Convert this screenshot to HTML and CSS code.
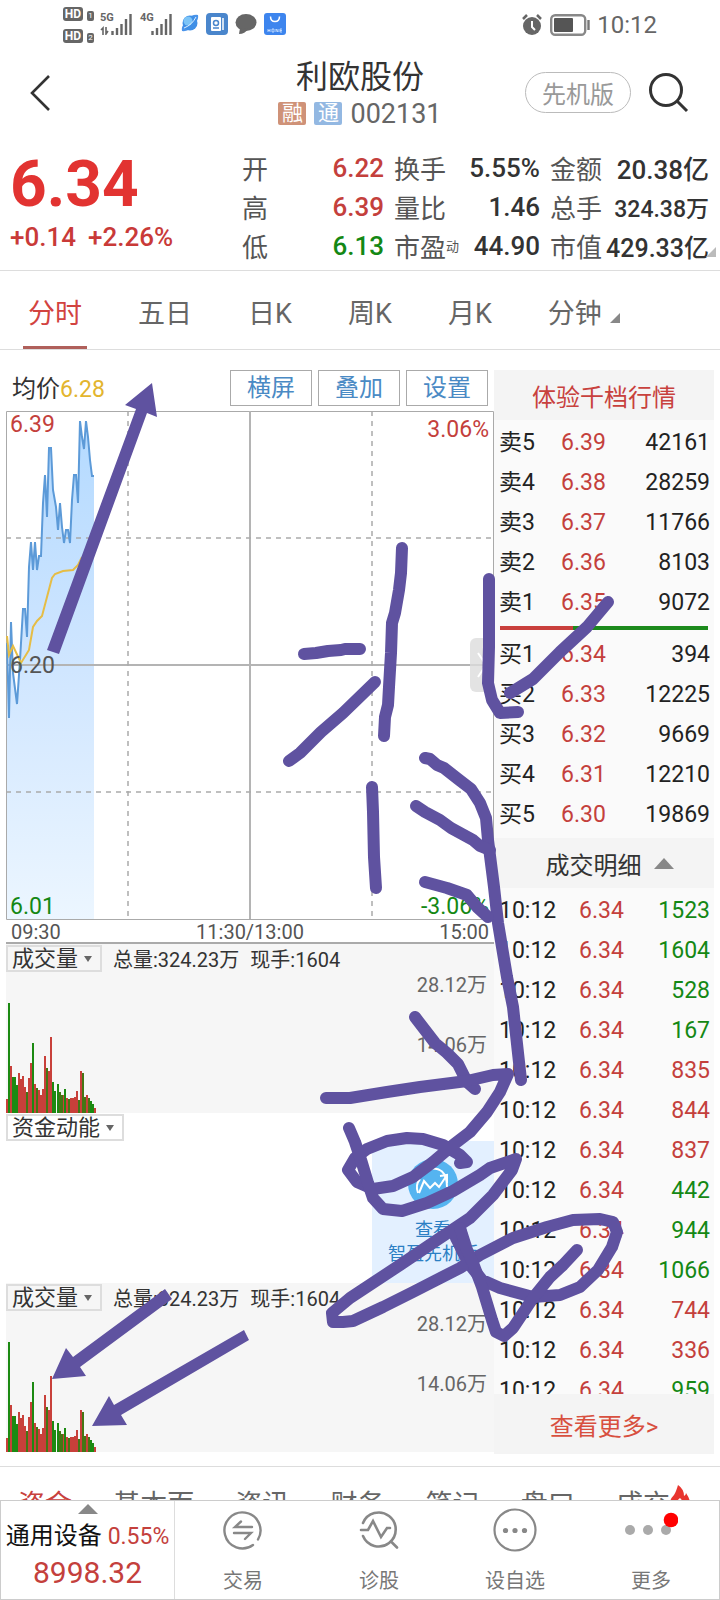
FILE: index.html
```html
<!DOCTYPE html>
<html lang="zh-CN">
<head>
<meta charset="utf-8">
<meta name="viewport" content="width=device-width, initial-scale=1">
<title>利欧股份 002131</title>
<link rel="stylesheet" href="styles.css">
</head>
<body>
<div class="screen">
  <div class="status">
    <div class="status-left">
      <span class="hd"><span class="hd-row"><b>HD</b><i>1</i></span><span class="hd-row"><b>HD</b><i>2</i></span></span>
      <span class="signal"><span class="net">5G</span>
        <svg width="32" height="22" viewBox="0 0 32 22"><g stroke="#666" stroke-width="2.4" fill="none"><path d="M12.5 18v4M17 15v7M21.500 11v11M26 6v16M30.500 1v21"/><path stroke-width="1.600" d="M1 17l2-2v7M6 14v7l2-3"/></g></svg></span>
      <span class="signal"><span class="net">4G</span>
        <svg width="32" height="22" viewBox="0 0 32 22"><path stroke="#666" stroke-width="2.4" d="M12.500 18v4M17 15v7M21.500 11v11M26 6v16M30.500 1v21"/></svg></span>
      <svg class="app planet" width="18" height="20" viewBox="0 0 18 20"><path d="M1 18q-1-4 3-9l9 4q-6 6-12 5zM17 2q1 4-3 9L5 7q6-6 12-5z" fill="#4a94ea"/><circle cx="9" cy="10" r="7.500" fill="#3f8fe6"/><circle cx="7" cy="8" r="4.500" fill="#7cc4f7"/><path d="M3 15q8-3 12-11" fill="none" stroke="#dff0ff"/></svg>
      <svg class="app" width="22" height="22" viewBox="0 0 22 22"><rect width="22" height="22" rx="4" fill="#4a86cc"/><rect x="5" y="4" width="10" height="14" rx="1" fill="#fff"/><path d="M17 5v12" stroke="#fff" stroke-width="1.500"/><circle cx="10" cy="10" r="2.500" fill="none" stroke="#4a86cc" stroke-width="1.500"/><path d="M7 15h6" stroke="#4a86cc" stroke-width="1.500"/></svg>
      <svg class="app" width="22" height="22" viewBox="0 0 22 22"><ellipse cx="11" cy="9.500" rx="10.500" ry="8.500" fill="#666"/><path d="M5 15l-1 6q6 0 9-5z" fill="#666"/></svg>
      <svg class="app" width="22" height="22" viewBox="0 0 22 22"><rect width="22" height="22" rx="3" fill="#3d85ee"/><path d="M6.500 3.500q0 5 4.500 5t4.500-5" fill="none" stroke="#fff" stroke-width="1.500"/><path d="M4 16v3M4 17.500h2M6 16v3M8 16h2v3H8zM12 19v-3l2 3v-3M18 16h-2v3h2M16 17.500h2" fill="none" stroke="#d8e8ff" stroke-width=".8"/></svg>
    </div>
    <div class="status-right">
      <svg width="22" height="22" viewBox="0 0 22 22"><circle cx="11" cy="12" r="9" fill="#666"/><path d="M2 5l4-4M20 5l-4-4" stroke="#666" stroke-width="2.500"/><path d="M11 7v6l3 3" fill="none" stroke="#fff" stroke-width="2"/></svg>
      <svg width="40" height="22" viewBox="0 0 40 22"><rect x="1.200" y="1.200" width="34" height="19.600" rx="4" fill="none" stroke="#888" stroke-width="2.400"/><rect x="4" y="4" width="19" height="14" rx="1" fill="#555"/><path d="M38.500 6v10" stroke="#777" stroke-width="2.400"/></svg>
      <span class="clock">10:12</span>
    </div>
  </div>

  <header class="top">
    <div class="top-side">
      <button class="icon-btn" aria-label="返回"><svg width="22" height="40" viewBox="0 0 22 40"><path d="M19 3L2 20l17 17" fill="none" stroke="#333" stroke-width="2.600"/></svg></button>
    </div>
    <div class="top-title">
      <h1>利欧股份</h1>
      <div class="code"><span class="badge badge-rong">融</span><span class="badge badge-tong">通</span><span>002131</span></div>
    </div>
    <div class="top-side top-actions">
      <button class="pill">先机版</button>
      <button class="icon-btn" aria-label="搜索"><svg width="42" height="42" viewBox="0 0 42 42"><g fill="none" stroke="#333" stroke-width="3"><circle cx="18" cy="18" r="15.500"/><path d="M29 29l10 10"/></g></svg></button>
    </div>
  </header>

  <section class="quote">
    <div class="price">
      <div class="last">6.34</div>
      <div class="change"><span>+0.14</span><span>+2.26%</span></div>
    </div>
    <dl class="stats">
      <dt>开</dt><dd class="up">6.22</dd><dt>换手</dt><dd>5.55%</dd><dt>金额</dt><dd>20.38亿</dd>
      <dt>高</dt><dd class="up">6.39</dd><dt>量比</dt><dd>1.46</dd><dt>总手</dt><dd class="small">324.38万</dd>
      <dt>低</dt><dd class="down">6.13</dd><dt>市盈<sup>动</sup></dt><dd>44.90</dd><dt>市值</dt><dd class="mid">429.33亿</dd>
    </dl>
    <span class="corner quote-corner"></span>
  </section>

  <nav class="periods">
    <button class="period active">分时</button><button class="period">五日</button><button class="period">日K</button><button class="period">周K</button><button class="period">月K</button><button class="period">分钟<span class="corner dark"></span></button>
  </nav>

  <main class="board">
    <div class="charts">
      <div class="tools">
        <span class="avg">均价<em>6.28</em></span>
        <button class="tool">横屏</button><button class="tool">叠加</button><button class="tool">设置</button>
      </div>
      <div class="plot">
        <svg class="plot-art" viewBox="0 0 488 509" preserveAspectRatio="none">
          <defs><linearGradient id="area" x1="0" y1="0" x2="0" y2="1"><stop offset="0" stop-color="#b4daff"/><stop offset=".5" stop-color="#d0e6ff"/><stop offset="1" stop-color="#ecf6ff"/></linearGradient></defs>
          <path fill="url(#area)" d="M1 232L3 307 5 211 7 262 11 293 14 249 17 198H19L21 226 23 156 25 131 27 159 29 131 31 159 33 145H35L37 92 39 64 41 106 43 37H45L47 79 50 96 52 119 54 92 56 116 58 132 60 119H62L64 132 66 89 68 64H70L72 92 74 10 76 26 78 38 80 10 82 26 84 49 86 65H88V508H1z"/>
          <g fill="none" stroke="#aaa" stroke-width="1.500">
            <path d="M.5 .5H487.500V508.500H.5z" stroke-width="1"/><path d="M244 0V508M0 254H488" stroke="#b4b4b4" stroke-width="2"/>
            <path stroke-dasharray="5 5" d="M0 127H488M0 381H488M122 0V508M366 0V508"/>
          </g>
          <path fill="none" stroke="#5c9ad8" stroke-width="2" d="M1 232L3 307 5 211 7 262 11 293 14 249 17 198H19L21 226 23 156 25 131 27 159 29 131 31 159 33 145H35L37 92 39 64 41 106 43 37H45L47 79 50 96 52 119 54 92 56 116 58 132 60 119H62L64 132 66 89 68 64H70L72 92 74 10 76 26 78 38 80 10 82 26 84 49 86 65H88"/>
          <path fill="none" stroke="#e6bd45" stroke-width="2" d="M1 225L3 244 7 235 15 252 23 239 27 216 31 210 36 205 41 186 46 167 49 163 57 160 67 159 72 154 76 146"/>
        </svg>
        <span class="mark high up">6.39</span><span class="mark pct-high up">3.06%</span>
        <span class="mark open">6.20</span>
        <span class="mark low down">6.01</span><span class="mark pct-low down">-3.06%</span>
        <button class="fold" aria-label="收起盘口"><svg width="12" height="28" viewBox="0 0 12 28"><path d="M2 2l8 12-8 12" fill="none" stroke="#fff" stroke-width="2"/></svg></button>
      </div>
      <div class="axis"><span>09:30</span><span>11:30/13:00</span><span>15:00</span></div>

      <div class="volume">
        <div class="volume-head"><button class="picker">成交量<span class="caret"></span></button><span>总量:324.23万</span><span>现手:1604</span></div>
        <svg class="bars" width="90" height="112" viewBox="0 0 90 112">
          <g id="vol" fill="none" stroke-width="2"><path stroke="#c8403a" d="M1 112v-14M5 112v-47M13 112v-40M15 112v-34M17 112v-37M19 112v-26M23 112v-35M25 112v-50M29 112v-29M33 112v-23M35 112v-18M37 112v-24M39 112v-57M43 112v-42M45 112v-76M57 112v-18M61 112v-15M65 112v-15M67 112v-15M69 112v-16M71 112v-22M75 112v-42M81 112v-18M89 112v-5"/><path stroke="#1c8a12" d="M3 112v-110M7 112v-36M9 112v-36M11 112v-28M27 112v-70M47 112v-31M49 112v-22M52 112v-29M59 112v-24M85 112v-12M87 112v-9"/><path stroke="#447614" d="M21 112v-21M31 112v-25M41 112v-45M54 112v-21M56 112v-18M63 112v-14M73 112v-13M77 112v-40M79 112v-16M83 112v-15"/></g>
        </svg>
        <span class="scale scale-top">28.12万</span><span class="scale scale-half">14.06万</span>
      </div>

      <div class="energy">
        <button class="picker">资金动能<span class="caret"></span></button>
        <a class="promo" href="#">
          <svg width="50" height="50" viewBox="0 0 50 50"><circle cx="25" cy="25" r="25" fill="#55b4f0"/><g fill="none" stroke="#fff" stroke-width="2"><path d="M11 34l5-12 6 7 5-5 4 4 8-12M32 17l7-1v8"/><path d="M19 10q20-4 20 18M10 34q-3-8 2-14"/></g></svg>
          <span>查看</span><span>智盈先机版</span>
        </a>
      </div>

      <div class="volume">
        <div class="volume-head"><button class="picker">成交量<span class="caret"></span></button><span>总量:324.23万</span><span>现手:1604</span></div>
        <svg class="bars" width="90" height="112" viewBox="0 0 90 112"><use href="#vol"/></svg>
        <span class="scale scale-top">28.12万</span><span class="scale scale-half">14.06万</span>
      </div>
    </div>

    <aside class="book">
      <button class="book-head link-red">体验千档行情</button>
      <table class="orders">
        <tr><th>卖5</th><td>6.39</td><td>42161</td></tr>
        <tr><th>卖4</th><td>6.38</td><td>28259</td></tr>
        <tr><th>卖3</th><td>6.37</td><td>11766</td></tr>
        <tr><th>卖2</th><td>6.36</td><td>8103</td></tr>
        <tr><th>卖1</th><td>6.35</td><td>9072</td></tr>
      </table>
      <div class="ratio"><span style="width:35%"></span></div>
      <table class="orders">
        <tr><th>买1</th><td>6.34</td><td>394</td></tr>
        <tr><th>买2</th><td>6.33</td><td>12225</td></tr>
        <tr><th>买3</th><td>6.32</td><td>9669</td></tr>
        <tr><th>买4</th><td>6.31</td><td>12210</td></tr>
        <tr><th>买5</th><td>6.30</td><td>19869</td></tr>
      </table>
      <button class="book-head detail">成交明细<svg width="20" height="11" viewBox="0 0 20 11"><path d="M10 0l10 11H0z" fill="#888"/></svg></button>
      <div class="ticks-wrap">
        <table class="orders ticks">
          <tr><th>10:12</th><td>6.34</td><td class="down">1523</td></tr>
          <tr><th>10:12</th><td>6.34</td><td class="down">1604</td></tr>
          <tr><th>10:12</th><td>6.34</td><td class="down">528</td></tr>
          <tr><th>10:12</th><td>6.34</td><td class="down">167</td></tr>
          <tr><th>10:12</th><td>6.34</td><td class="up">835</td></tr>
          <tr><th>10:12</th><td>6.34</td><td class="up">844</td></tr>
          <tr><th>10:12</th><td>6.34</td><td class="up">837</td></tr>
          <tr><th>10:12</th><td>6.34</td><td class="down">442</td></tr>
          <tr><th>10:12</th><td>6.34</td><td class="down">944</td></tr>
          <tr><th>10:12</th><td>6.34</td><td class="down">1066</td></tr>
          <tr><th>10:12</th><td>6.34</td><td class="up">744</td></tr>
          <tr><th>10:12</th><td>6.34</td><td class="up">336</td></tr>
          <tr><th>10:12</th><td>6.34</td><td class="down">959</td></tr>
        </table>
      </div>
      <button class="book-head more">查看更多&gt;</button>
    </aside>
  </main>

  <nav class="sections">
    <a class="active" href="#">资金</a><a href="#">基本面</a><a href="#">资讯</a><a href="#">财务</a><a href="#">笔记</a><a href="#">盘口</a><a href="#">成交<svg width="20" height="26" viewBox="0 0 20 26"><path d="M8 0q6 4 6 11 2-1 2-3 4 6 4 10 0 8-10 8T0 18q0-4 4-8 2-3 4-10z" fill="#e8352f"/><path d="M10 26q-5 0-5-5 1-5 5-8 4 4 4 8t-4 5z" fill="#fff"/></svg></a>
  </nav>

  <footer class="dock">
    <button class="index">
      <svg width="20" height="10" viewBox="0 0 20 10"><path d="M10 0l10 10H0z" fill="#888"/></svg>
      <span class="index-name">通用设备 <em>0.55%</em></span>
      <span class="index-value">8998.32</span>
    </button>
    <div class="dock-items">
    <button class="dock-item"><svg width="44" height="44" viewBox="0 0 44 44"><g fill="none" stroke="#888" stroke-width="2.400" stroke-linecap="round"><path d="M37 31.500A18 18 0 1 0 32 37"/><path d="M31 19H14l6-5.500M13 25h17l-6 6"/></g></svg>交易</button>
    <button class="dock-item"><svg width="44" height="44" viewBox="0 0 44 44"><g fill="none" stroke="#888" stroke-width="2.600" stroke-linecap="round"><path d="M6 15A17 17 0 1 1 6 28M34 33.500l6 6"/><path d="M4 22h7l5-9 8 16 6-9h3"/></g></svg>诊股</button>
    <button class="dock-item"><svg width="44" height="44" viewBox="0 0 44 44"><circle cx="22" cy="22" r="20.500" fill="none" stroke="#888" stroke-width="2.200"/><g fill="#888"><circle cx="12.500" cy="22.500" r="2.600"/><circle cx="22" cy="22.500" r="2.600"/><circle cx="31.500" cy="22.500" r="2.600"/></g></svg>设自选</button>
    <button class="dock-item"><svg width="54" height="44" viewBox="0 0 54 44"><g fill="#aaa"><circle cx="6" cy="22" r="5"/><circle cx="24" cy="22" r="5"/><circle cx="42" cy="22" r="5"/></g><circle cx="47" cy="12" r="7.300" fill="#f00"/></svg>更多</button>
    </div>
  </footer>

  <svg class="ink" viewBox="0 0 720 1600" preserveAspectRatio="none" aria-hidden="true">
    <g fill="#5f52a0">
      <path d="M152 383l5 34-10-4-88 241-12-4 89-241-11-4z"/>
      <path d="M52 1379l14-31 7 9 92-68 7 10-92 68 6 9z"/>
      <path d="M92 1426l17-30 5 9 130-75 5 10-128 75 6 10z"/>
      <path d="M450 1234l16-6 14 55-12-12q-12-14-18-37z"/>
    </g>
    <g fill="none" stroke="#5f52a0" stroke-width="12" stroke-linecap="round" stroke-linejoin="round">
      <path d="M304 654L316 653 328 651 341 650 345 649 360 649"/>
      <path d="M402 548L401 573 399 590 395 613 392 623 391 653 389 687 388 705 385 717 384 736"/>
      <path d="M375 682L343 713 321 732 300 753 289 761"/>
      <path d="M489 579L489 647 488 683 492 700 500 713 518 712"/>
      <path d="M510 693L533 679 560 652 587 627 608 602"/>
      <path d="M372 787L373 812 374 857 376 888"/>
      <path d="M425 758L430 759 437 765 444 768 458 779 471 789 480 803 486 818 488 840 494 887 498 923 507 977 513 1007 518 1053 521 1080"/>
      <path d="M416 806L425 812 440 820 451 828 462 834 473 840 480 846 490 850"/>
      <path d="M425 882L447 888 467 895 477 907 488 917"/>
      <path d="M415 1017L435 1043 447 1053 458 1064 467 1082 475 1089"/>
      <path d="M326 1098H350L387 1092 420 1087 467 1081 493 1075 508 1074 500 1092 487 1112 470 1132 453 1145 433 1162 413 1177 393 1186 373 1189 357 1182 348 1170 355 1158 367 1149 387 1141 407 1138 423 1139 443 1145 460 1155 467 1162 460 1163"/>
      <path d="M349 1128L355 1142 362 1163 368 1183 373 1198 383 1209 402 1211 427 1203 453 1191 480 1175 490 1168 516 1159 512 1170 493 1195 470 1218 440 1238 400 1265 350 1298 332 1313 333 1322H343L353 1321 383 1307 413 1292 460 1268 480 1255 513 1238 547 1227 573 1220 600 1219 613 1222 617 1232 612 1247 598 1270 580 1287 560 1295 533 1297 500 1288 482 1280 470 1265 456 1238"/>
      <path d="M460 1228L467 1250 473 1263 482 1287 492 1320 496 1332 504 1336 513 1328 533 1298 550 1277 563 1265 577 1250"/>
    </g>
  </svg>
</div>
</body>
</html>
```
FILE: styles.css
```css
* { box-sizing: border-box; }
body {
  margin: 0;
  background: #fff;
  color: #333;
  font-family: Roboto, "Noto Sans CJK SC", sans-serif;
}
button {
  margin: 0;
  padding: 0;
  border: 0;
  background: none;
  color: inherit;
  font: inherit;
}
a { color: inherit; text-decoration: none; }
em, i { font-style: normal; }
svg { display: block; flex: none; }
.up { color: #c4403c; }
.down { color: #148814; }

.screen { position: relative; min-height: 100vh; display: flex; flex-direction: column; }

/* status bar */
.status {
  display: flex;
  justify-content: space-between;
  height: 50px;
  padding: 0 63px 0 63px;
  color: #666;
}
.status-left { display: flex; align-items: flex-start; padding-top: 7px; }
.hd { display: flex; flex-direction: column; gap: 8px; width: 37px; }
.hd-row { display: flex; align-items: flex-end; gap: 4px; height: 14px; }
.hd-row b { width: 20px; height: 14px; border-radius: 3px; background: #666; color: #fff; font-size: 12px; line-height: 14px; text-align: center; }
.hd-row i { width: 7px; height: 10px; border-radius: 2px; background: #666; color: #fff; font-size: 8px; line-height: 10px; text-align: center; }
.signal { position: relative; width: 40px; padding-top: 6px; }
.net { position: absolute; top: 5px; left: 0; font-size: 11px; font-weight: 700; line-height: 12px; }
.app { margin: 6px 7px 0 0; }
.planet { margin-left: 1px; }
.status-right { display: flex; align-items: center; gap: 7px; font-size: 24px; }
.clock { line-height: 50px; }

/* title bar */
.top { display: flex; align-items: center; height: 90px; padding: 0 30px 5px; }
.top-side { flex: 1; display: flex; align-items: center; }
.top-title { text-align: center; }
.top-actions { justify-content: flex-end; gap: 17px; }
.top h1 { margin: 0; font-size: 32px; font-weight: 400; line-height: 42px; }
.code { display: flex; align-items: center; gap: 8px; font-size: 27px; line-height: 32px; color: #666; }
.badge { width: 28px; height: 23px; border-radius: 2px; color: #fff; font-size: 21px; line-height: 23px; text-align: center; }
.badge-rong { background: #cf9278; }
.badge-tong { background: #93b8e2; }
.pill { width: 106px; height: 41px; border: 1px solid #bbb; border-radius: 21px; color: #999; font-size: 24px; }

/* quote */
.quote { position: relative; display: flex; height: 131px; border-bottom: 1px solid #ddd; }
.price { width: 242px; padding: 9px 0 0 10px; color: #e23331; }
.last { font-size: 64px; font-weight: 700; line-height: 72px; }
.change { display: flex; gap: 12px; color: #c93a38; font-size: 26px; font-weight: 500; line-height: 32px; }
.stats {
  flex: 1;
  display: grid;
  grid-template-columns: 52px minmax(0, 80fr) 52px minmax(0, 84fr) 52px minmax(0, 97fr);
  grid-auto-rows: 39px;
  column-gap: 10px;
  align-items: center;
  margin: 0;
  padding: 8px 11px 0 0;
  font-size: 26px;
  white-space: nowrap;
}
.stats dt { color: #555; }
.stats dd { justify-self: end; margin: 0; font-weight: 500; }
.stats .mid { font-size: 25px; }
.stats .small { font-size: 23px; }
.stats sup { font-size: 13px; vertical-align: 6px; line-height: 13px; }
.corner { display: inline-block; border-style: solid; border-width: 0 0 10px 10px; border-color: transparent transparent #bbb; }
.quote-corner { position: absolute; right: 4px; bottom: 13px; }

/* period tabs */
.periods { display: flex; gap: 46px; height: 79px; padding-left: 23px; border-bottom: 1px solid #ddd; font-size: 27px; color: #666; }
.period { position: relative; padding: 3px 5px 0; }
.period.active { color: #d2433f; border-bottom: 3px solid #b0605b; padding-top: 6px; }
.corner.dark { margin-left: 8px; border-bottom-color: #888; }

/* board */
.board { display: flex; padding: 20px 6px 12px; }
.charts { flex: 488; min-width: 0; }
.book { flex: 220; min-width: 0; background: #fafafa; color: #222; }

.tools { display: flex; gap: 6px; height: 41px; padding-right: 6px; }
.avg { flex: 1; padding: 4px 0 0 6px; font-size: 24px; line-height: 31px; }
.avg em { color: #e3b52e; font-size: 23px; }
.tool { width: 82px; height: 36px; border: 1px solid #aaa; color: #4a8ac4; font-size: 24px; line-height: 34px; }

.plot { position: relative; height: 509px; font-size: 23px; line-height: 28px; }
.plot-art { width: 100%; height: 100%; }
.mark { position: absolute; left: 4px; }
.high { top: 0; }
.pct-high { top: 5px; left: auto; right: 5px; }
.open { top: 241px; color: #555; }
.low { bottom: -1px; }
.pct-low { bottom: -1px; left: auto; right: 5px; }
.fold { position: absolute; right: 0; top: 227px; display: grid; place-items: center; width: 24px; height: 54px; border-radius: 6px 0 0 6px; background: rgba(220, 220, 220, .8); }

.axis { display: grid; grid-template-columns: 1fr auto 1fr; height: 24px; padding: 0 5px; border-bottom: 2px solid #aaa; color: #555; font-size: 20px; line-height: 25px; }
.axis span:last-child { text-align: right; }

.volume { position: relative; height: 169px; background: #f6f6f6; }
.volume-head { display: flex; align-items: flex-start; gap: 11px; padding-top: 1px; font-size: 20px; line-height: 30px; }
.picker { display: inline-flex; align-items: center; gap: 6px; height: 27px; padding: 0 8px 0 4px; border: 2px solid #ddd; font-size: 22px; line-height: 23px; }
.caret { border-style: solid; border-width: 6px 4px 0; border-color: #666 transparent transparent; }
.bars { position: absolute; left: 0; bottom: 0; }
.scale { position: absolute; right: 7px; color: #666; font-size: 20px; line-height: 24px; }
.scale-top { top: 29px; }
.scale-half { top: 89px; }

.energy { display: flex; align-items: flex-start; justify-content: space-between; height: 170px; padding-top: 1px; }
.promo { display: flex; flex-direction: column; align-items: center; width: 25%; height: 142px; margin-top: 27px; padding-top: 18px; background: #e3f0ff; color: #2b7fc4; font-size: 18px; line-height: 24px; }
.promo svg { margin-bottom: 9px; }

/* order book */
.book-head { display: flex; align-items: center; justify-content: center; width: 100%; height: 50px; background: #f4f4f4; font-size: 24px; }
.link-red { color: #c8413d; }
.orders { width: 100%; margin: 3px 0; border-collapse: collapse; table-layout: fixed; font-size: 23px; }
.orders tr { height: 40px; }
.orders th, .orders td { padding: 0; font-weight: 400; line-height: 40px; }
.orders th { width: 67px; padding-left: 5px; text-align: left; }
.orders td:nth-child(2) { color: #c4403c; }
.orders td:last-child { padding-right: 4px; text-align: right; }
.ratio { height: 4px; margin: 0 6px 5px; background: #1c8a1c; }
.ratio span { display: block; height: 4px; background: #c93f3c; }
.detail { gap: 12px; padding-left: 11px; color: #333; }
.ticks-wrap { height: 506px; overflow: hidden; }
.ticks th { width: 85px; }
.more { height: 60px; color: #d8503f; }

/* lower tabs, cut off by the dock */
.sections { display: flex; justify-content: space-between; height: 34px; padding: 18px 30px 0 18px; overflow: hidden; border-top: 1px solid #ddd; color: #666; font-size: 27px; line-height: 40px; }
.sections a { display: flex; white-space: nowrap; }
.sections .active { color: #c8413d; }

/* dock */
.dock { position: relative; display: flex; height: 100px; border: 1px solid #ccc; background: #fff; }
.index { display: flex; flex-direction: column; align-items: center; width: 174px; padding-top: 3px; border-right: 1px solid #ddd; color: #111; font-size: 24px; white-space: nowrap; }
.index em, .index-value { color: #c4403c; }
.index em { font-size: 23px; }
.index-name { padding-top: 4px; line-height: 36px; }
.index-value { font-size: 30px; line-height: 36px; }
.dock-items { flex: 1; display: flex; }
.dock-item { flex: 1; display: flex; flex-direction: column; align-items: center; padding-top: 7px; color: #777; font-size: 20px; line-height: 24px; gap: 17px; }

/* handwriting laid over the whole screen */
.ink { position: absolute; left: 0; top: 0; width: 100%; height: 100%; pointer-events: none; }
```
